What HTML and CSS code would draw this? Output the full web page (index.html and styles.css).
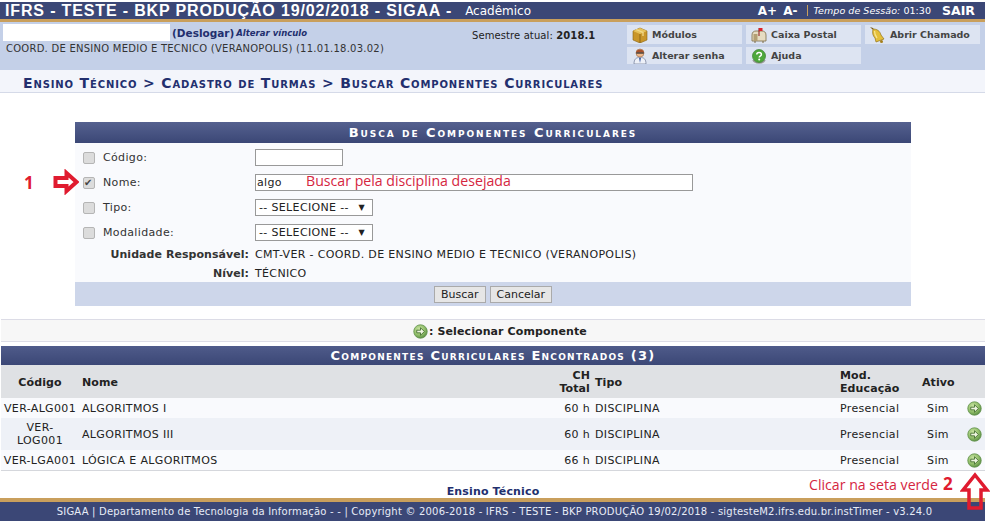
FILE: index.html
```html
<!DOCTYPE html>
<html lang="pt-BR">

<head>
    <meta charset="UTF-8">
    <title>SIGAA - Buscar Componentes Curriculares</title>
    <link rel="stylesheet" href="styles.css">
</head>

<body>
    <svg class="defs" width="0" height="0">
        <defs>
            <radialGradient id="greenBall" cx="40%" cy="35%" r="70%">
                <stop offset="0" stop-color="#cfe8a8"/>
                <stop offset="0.6" stop-color="#8fbc68"/>
                <stop offset="1" stop-color="#54883f"/>
            </radialGradient>
            <symbol id="go" viewBox="0 0 16 16">
                <circle cx="8" cy="8" r="7.2" fill="url(#greenBall)" stroke="#5d8f48" stroke-width="0.8"/>
                <path d="M4 6.6h4V4l4.2 4-4.2 4V9.400H4z" fill="#eef4e0" stroke="#3f6b2c" stroke-width="0.9"/>
            </symbol>
        </defs>
    </svg>

    <div class="page">
        <div class="top-bar">
            <div class="top-left">
                <span class="system-name">IFRS - TESTE - BKP PRODUÇÃO 19/02/2018 - SIGAA -</span>
                <span class="module-name">Acadêmico</span>
            </div>
            <div class="top-right">
                <span class="font-size">A+</span>
                <span class="font-size">A-</span>
                <span class="session">Tempo de Sessão: <span class="session-time">01:30</span></span>
                <span class="logout">SAIR</span>
            </div>
        </div>

        <div class="info-panel">
            <div class="user-info">
                <div class="user-line">
                    <span class="user-name"></span>
                    <a class="logoff">(Deslogar)</a>
                    <a class="change-link">Alterar vínculo</a>
                </div>
                <div class="user-unit">COORD. DE ENSINO MEDIO E TECNICO (VERANOPOLIS) (11.01.18.03.02)</div>
            </div>
            <div class="semester">Semestre atual: <b>2018.1</b></div>
            <div class="shortcuts">
                <a class="shortcut">
                    <svg viewBox="0 0 16 16" width="16" height="16"><path d="M1 4l7-3 7 3v9l-7 3-7-3z" fill="#c9962a" stroke="#8a6414" stroke-width="0.6"/><path d="M1 4l7 3 7-3-7-3z" fill="#e6c25a"/><path d="M8 7v9" stroke="#7d5a12" stroke-width="0.8"/><path d="M4 2.500l7 3v3.500" stroke="#f1d98a" stroke-width="1.300" fill="none"/></svg>
                    Módulos
                </a>
                <a class="shortcut">
                    <svg viewBox="0 0 16 16" width="16" height="16"><path d="M1 8c0-3 2-4 4-4h6c2 0 4 1 4 4v6H1z" fill="#e6dcc2" stroke="#7c6a44" stroke-width="0.8"/><path d="M4 14v2M12 14v2" stroke="#7c6a44"/><path d="M2.500 7h4v7h-4z" fill="#b39f74"/><path d="M8 9V1" stroke="#8a1216" stroke-width="1"/><path d="M8 1h3.500v3H8z" fill="#dc2229"/></svg>
                    Caixa Postal
                </a>
                <a class="shortcut">
                    <svg viewBox="0 0 16 16" width="16" height="16"><path d="M0 0l3 1 1 2-2-1z" fill="#7a5a18"/><path d="M3 2c4 0 7 2 8 6l3 4-8 3-1-4C3 9 2 6 3 2z" fill="#e4bf3a" stroke="#93731a" stroke-width="0.7"/><path d="M4.500 4c0 3 1 5 2.500 7" stroke="#f7e48e" stroke-width="1.300" fill="none"/><circle cx="11.500" cy="14.500" r="1.500" fill="#a57f1c"/></svg>
                    Abrir Chamado
                </a>
                <a class="shortcut">
                    <svg viewBox="0 0 16 16" width="16" height="16"><path d="M2 16c0-5 2-6.500 6-6.500s6 1.500 6 6.500z" fill="#eef1f8" stroke="#6a7694" stroke-width="0.7"/><path d="M7 10l1 5 1-5z" fill="#3c5ea8"/><circle cx="8" cy="5" r="4" fill="#eeb98c" stroke="#9a6a48" stroke-width="0.6"/><path d="M4 4.500C4.500 0.500 11.500 0.500 12 4.500z" fill="#a8502c"/><path d="M4.200 5h7.600" stroke="#333" stroke-width="1.300"/></svg>
                    Alterar senha
                </a>
                <a class="shortcut">
                    <svg viewBox="0 0 16 16" width="16" height="16"><path d="M2 12c2 4 10 4 12 0" stroke="#9a9a9a" fill="none" stroke-width="1.600"/><circle cx="8" cy="8" r="6.500" fill="#4ea83c" stroke="#3a7c2c" stroke-width="0.7"/><path d="M5.800 6.500c0-2.800 4.600-2.800 4.600 0 0 1.600-2.200 1.600-2.200 3" stroke="#fff" stroke-width="1.500" fill="none"/><circle cx="8.200" cy="11.500" r="1" fill="#fff"/></svg>
                    Ajuda
                </a>
            </div>
        </div>

        <div class="breadcrumb">Ensino Técnico &gt; Cadastro de Turmas &gt; Buscar Componentes Curriculares</div>

        <form class="search-form">
            <div class="form-title">Busca de Componentes Curriculares</div>
            <div class="form-body">
                <div class="form-row">
                    <input type="checkbox" class="row-check">
                    <label>Código:</label>
                    <input type="text" class="text-input code-input">
                </div>
                <div class="form-row">
                    <input type="checkbox" class="row-check" checked>
                    <label>Nome:</label>
                    <input type="text" class="text-input name-input" value="algo">
                </div>
                <div class="form-row">
                    <input type="checkbox" class="row-check">
                    <label>Tipo:</label>
                    <span class="fake-select">-- SELECIONE -- <i class="caret">▼</i></span>
                </div>
                <div class="form-row">
                    <input type="checkbox" class="row-check">
                    <label>Modalidade:</label>
                    <span class="fake-select">-- SELECIONE -- <i class="caret">▼</i></span>
                </div>
                <div class="info-row unit-row">
                    <b>Unidade Responsável:</b>
                    <span>CMT-VER - COORD. DE ENSINO MEDIO E TECNICO (VERANOPOLIS)</span>
                </div>
                <div class="info-row">
                    <b>Nível:</b>
                    <span>TÉCNICO</span>
                </div>
            </div>
            <div class="form-footer">
                <button type="button">Buscar</button>
                <button type="button">Cancelar</button>
            </div>
        </form>

        <div class="legend">
            <svg width="15" height="15"><use href="#go"/></svg>
            <b>: Selecionar Componente</b>
        </div>

        <table class="results">
            <caption>Componentes Curriculares Encontrados (3)</caption>
            <colgroup>
                <col class="col-code">
                <col class="col-name">
                <col class="col-ch">
                <col class="col-type">
                <col class="col-mod">
                <col class="col-active">
                <col class="col-go">
            </colgroup>
            <thead>
                <tr>
                    <th class="center">Código</th>
                    <th>Nome</th>
                    <th class="right">CH<br>Total</th>
                    <th>Tipo</th>
                    <th>Mod.<br>Educação</th>
                    <th class="center">Ativo</th>
                    <th></th>
                </tr>
            </thead>
            <tbody>
                <tr class="odd">
                    <td class="center code">VER-ALG001</td>
                    <td>ALGORITMOS I</td>
                    <td class="right">60 h</td>
                    <td>DISCIPLINA</td>
                    <td>Presencial</td>
                    <td class="center">Sim</td>
                    <td class="go-cell"><svg class="go-icon" width="15" height="15"><use href="#go"/></svg></td>
                </tr>
                <tr class="even">
                    <td class="center code">VER-<br>LOG001</td>
                    <td>ALGORITMOS III</td>
                    <td class="right">60 h</td>
                    <td>DISCIPLINA</td>
                    <td>Presencial</td>
                    <td class="center">Sim</td>
                    <td class="go-cell"><svg class="go-icon" width="15" height="15"><use href="#go"/></svg></td>
                </tr>
                <tr class="odd">
                    <td class="center code">VER-LGA001</td>
                    <td>LÓGICA E ALGORITMOS</td>
                    <td class="right">66 h</td>
                    <td>DISCIPLINA</td>
                    <td>Presencial</td>
                    <td class="center">Sim</td>
                    <td class="go-cell"><svg class="go-icon" width="15" height="15"><use href="#go"/></svg></td>
                </tr>
            </tbody>
        </table>

        <div class="module-link">Ensino Técnico</div>

        <div class="footer">SIGAA | Departamento de Tecnologia da Informação - - | Copyright © 2006-2018 - IFRS - TESTE - BKP PRODUÇÃO 19/02/2018 - sigtesteM2.ifrs.edu.br.instTimer - v3.24.0</div>

        <!-- anotacoes em vermelho por cima da tela -->
        <span class="note note-one">1</span>
        <svg class="note-arrow arrow-right" viewBox="0 0 26 26" width="26" height="26">
            <path d="M2.500 9h11V4l10 9-10 9v-5h-11z" fill="#fff" stroke="#e01b2f" stroke-width="4"/>
        </svg>
        <span class="note-text note-search">Buscar pela disciplina desejada</span>
        <span class="note-text note-click">Clicar na seta verde</span>
        <span class="note note-two">2</span>
        <svg class="note-arrow arrow-up" viewBox="0 0 30 38" width="30" height="38">
            <path d="M15 3l12 15h-6v18H9V18H3z" fill="none" stroke="#e01b2f" stroke-width="3.500"/>
        </svg>
    </div>
</body>

</html>
```

FILE: styles.css
```css
body {
    margin: 0;
    padding: 0;
    background-color: #fff;
    font-family: "DejaVu Sans", Verdana, sans-serif;
    font-size: 11px;
    letter-spacing: 0.35px;
    color: #222;
}

.defs {
    position: absolute;
}

.page {
    position: relative;
    width: 985px;
    height: 523px;
    padding-top: 2px;
    box-sizing: border-box;
}

/* barra superior */
.top-bar {
    display: flex;
    justify-content: space-between;
    align-items: center;
    height: 17px;
    background-color: #3b4776;
    border-bottom: 3px solid #c99f5c;
    color: #fff;
}

.top-left {
    display: flex;
    align-items: center;
    padding-left: 5px;
}

.system-name {
    font-family: "Liberation Sans", Arial, sans-serif;
    font-size: 16px;
    font-weight: bold;
    letter-spacing: 0.85px;
    white-space: nowrap;
}

.module-name {
    margin-left: 13px;
    font-size: 12px;
    letter-spacing: 0;
}

.top-right {
    display: flex;
    align-items: center;
    padding-right: 10px;
}

.font-size {
    margin-right: 6px;
    font-size: 12px;
    font-weight: bold;
    letter-spacing: 0;
}

.session {
    margin-left: 4px;
    padding-left: 5px;
    border-left: 1px solid #c99f5c;
    font-size: 9.500px;
    font-style: italic;
    letter-spacing: 0.05px;
}

.session-time {
    font-style: normal;
}

.logout {
    margin-left: 11px;
    font-size: 12.500px;
    font-weight: bold;
    letter-spacing: 0;
}

/* painel do usuario */
.info-panel {
    display: flex;
    height: 48px;
    background-color: #c4d0e8;
}

.user-info {
    width: 472px;
    padding: 2px 0 0 3px;
    box-sizing: border-box;
}

.user-line {
    display: flex;
    align-items: center;
}

.user-name {
    width: 167px;
    height: 17px;
    background-color: #fff;
}

.logoff {
    margin-left: 2px;
    color: #222f6e;
    font-size: 10.500px;
    font-weight: bold;
    letter-spacing: 0;
}

.change-link {
    margin-left: 2px;
    color: #222f6e;
    font-size: 8.500px;
    font-style: italic;
    font-weight: bold;
    letter-spacing: 0;
}

.user-unit {
    margin-top: 2px;
    padding-left: 3px;
    font-size: 10px;
    letter-spacing: 0.25px;
    color: #333;
    white-space: nowrap;
}

.semester {
    width: 155px;
    padding-top: 8px;
    font-size: 10px;
    letter-spacing: 0.1px;
}

.shortcuts {
    display: grid;
    grid-template-columns: 115px 115px 115px;
    grid-template-rows: 19px 17px;
    column-gap: 4px;
    row-gap: 3px;
    padding-top: 3px;
}

.shortcut {
    display: flex;
    align-items: center;
    gap: 4px;
    padding-left: 5px;
    background-color: #dde4f2;
    color: #444;
    font-size: 9.500px;
    font-weight: bold;
    letter-spacing: 0;
    white-space: nowrap;
}

/* caminho */
.breadcrumb {
    height: 22px;
    padding-left: 23px;
    line-height: 26px;
    background-color: #f3f5fb;
    border-bottom: 1px solid #d5dae8;
    color: #222f6e;
    font-size: 14px;
    font-weight: bold;
    font-variant: small-caps;
    letter-spacing: 0.86px;
}

/* formulario de busca */
.search-form {
    width: 836px;
    margin: 29px 0 0 75px;
}

.form-title {
    height: 21px;
    line-height: 22px;
    background: linear-gradient(#55618f, #3b4776);
    color: #fff;
    font-size: 13px;
    font-weight: bold;
    font-variant: small-caps;
    letter-spacing: 1.92px;
    text-align: center;
}

.form-body {
    height: 139px;
    padding-top: 2px;
    box-sizing: border-box;
    background-color: #f9fafd;
}

.form-row {
    display: flex;
    align-items: center;
    height: 25px;
}

.row-check {
    appearance: none;
    position: relative;
    width: 12px;
    height: 12px;
    margin: 0 8px 0 8px;
    border: 1px solid #b5b5b5;
    border-radius: 2px;
    background-color: #dcdcdc;
}

.row-check:checked::after {
    content: "✔";
    position: absolute;
    left: 0;
    top: -1px;
    font-size: 10px;
    line-height: 12px;
    color: #444;
}

.form-row label {
    width: 152px;
    color: #333;
}

.text-input {
    height: 17px;
    padding: 0 1px;
    box-sizing: border-box;
    border: 1px solid #999;
    background-color: #fff;
    font-family: inherit;
    font-size: 11px;
    letter-spacing: 0.35px;
    color: #222;
}

.code-input {
    width: 88px;
}

.name-input {
    width: 438px;
}

.fake-select {
    display: flex;
    align-items: center;
    justify-content: space-between;
    width: 118px;
    height: 17px;
    padding: 0 7px 0 3px;
    box-sizing: border-box;
    border: 1px solid #999;
    background-color: #fff;
    white-space: pre;
}

.caret {
    font-size: 8px;
    font-style: normal;
}

.info-row {
    display: grid;
    grid-template-columns: 174px 1fr;
    column-gap: 6px;
    height: 18px;
    line-height: 18px;
}

.unit-row {
    height: 20px;
    line-height: 20px;
}

.info-row b {
    text-align: right;
    color: #333;
    letter-spacing: 0.05px;
}

.form-footer {
    display: flex;
    justify-content: center;
    align-items: center;
    gap: 4px;
    height: 24px;
    background-color: #cdd6ea;
}

.form-footer button {
    height: 17px;
    padding: 0 6px;
    border: 1px solid #aaa;
    background-color: #e6e6e6;
    font-family: inherit;
    font-size: 11px;
    letter-spacing: 0;
    color: #222;
}

/* legenda */
.legend {
    display: flex;
    justify-content: center;
    align-items: center;
    gap: 1px;
    height: 19px;
    margin: 13px 0 0 1px;
    padding: 2px 0 0 14px;
    background-color: #f7f7f7;
    border-top: 1px solid #dcdce6;
    border-bottom: 1px solid #dcdce6;
    font-size: 11px;
    letter-spacing: 0.1px;
}

/* tabela de resultados */
.results {
    width: 984px;
    margin: 4px 0 0 1px;
    border-collapse: collapse;
    table-layout: fixed;
    border-bottom: 1px solid #d5d7dc;
}

.results caption {
    height: 19px;
    line-height: 20px;
    background: linear-gradient(#4f5b8a, #3b4776);
    color: #fff;
    font-size: 13px;
    font-weight: bold;
    font-variant: small-caps;
    letter-spacing: 1.25px;
}

.col-code { width: 78px; }
.col-name { width: 471px; }
.col-ch { width: 42px; }
.col-type { width: 245px; }
.col-mod { width: 82px; }
.col-active { width: 38px; }
.col-go { width: 28px; }

.results th {
    height: 32px;
    padding: 1px 3px 0;
    background-color: #dfe1e4;
    color: #222;
    line-height: 13px;
    font-size: 11px;
    letter-spacing: 0.1px;
    text-align: left;
    vertical-align: middle;
}

.results td {
    padding: 0 3px;
    height: 20px;
    line-height: 13px;
    vertical-align: middle;
    white-space: nowrap;
}

.results tr.even td {
    height: 32px;
}

.results .odd td {
    background-color: #f9fafd;
}

.results .even td {
    background-color: #eef1f7;
}

.results th.center,
.results td.center {
    text-align: center;
}

.results th.right,
.results td.right {
    padding-right: 2px;
    text-align: right;
}

.results td.code {
    padding: 0;
}

.results td.go-cell {
    padding: 0 0 0 6px;
}

.go-icon {
    display: block;
    margin: 0 auto;
}

.module-link {
    margin-top: 15px;
    padding-left: 1px;
    height: 12px;
    line-height: 12px;
    color: #222f6e;
    font-weight: bold;
    letter-spacing: 0.15px;
    text-align: center;
}

.footer {
    height: 19px;
    padding-left: 4px;
    line-height: 19px;
    background-color: #3b4776;
    border-top: 4px solid #c99f5c;
    color: #e8ecf6;
    font-size: 10px;
    letter-spacing: 0.2px;
    text-align: center;
    white-space: nowrap;
}

/* anotacoes */
.note,
.note-text,
.note-arrow {
    position: absolute;
}

.note {
    color: #e01b2f;
    font-family: "Open Sans", sans-serif;
    font-size: 17px;
    font-weight: bold;
    line-height: 20px;
    letter-spacing: 0;
}

.note-text {
    color: #d5263f;
    font-family: "Open Sans", sans-serif;
    font-size: 14.150px;
    line-height: 16px;
    letter-spacing: 0;
    white-space: nowrap;
}

.note-one {
    left: 24px;
    top: 173px;
}

.arrow-right {
    left: 53px;
    top: 169px;
}

.note-search {
    left: 306px;
    top: 173px;
}

.note-click {
    left: 809px;
    top: 477px;
}

.note-two {
    left: 943px;
    top: 474px;
}

.arrow-up {
    left: 960px;
    top: 472px;
}
```
